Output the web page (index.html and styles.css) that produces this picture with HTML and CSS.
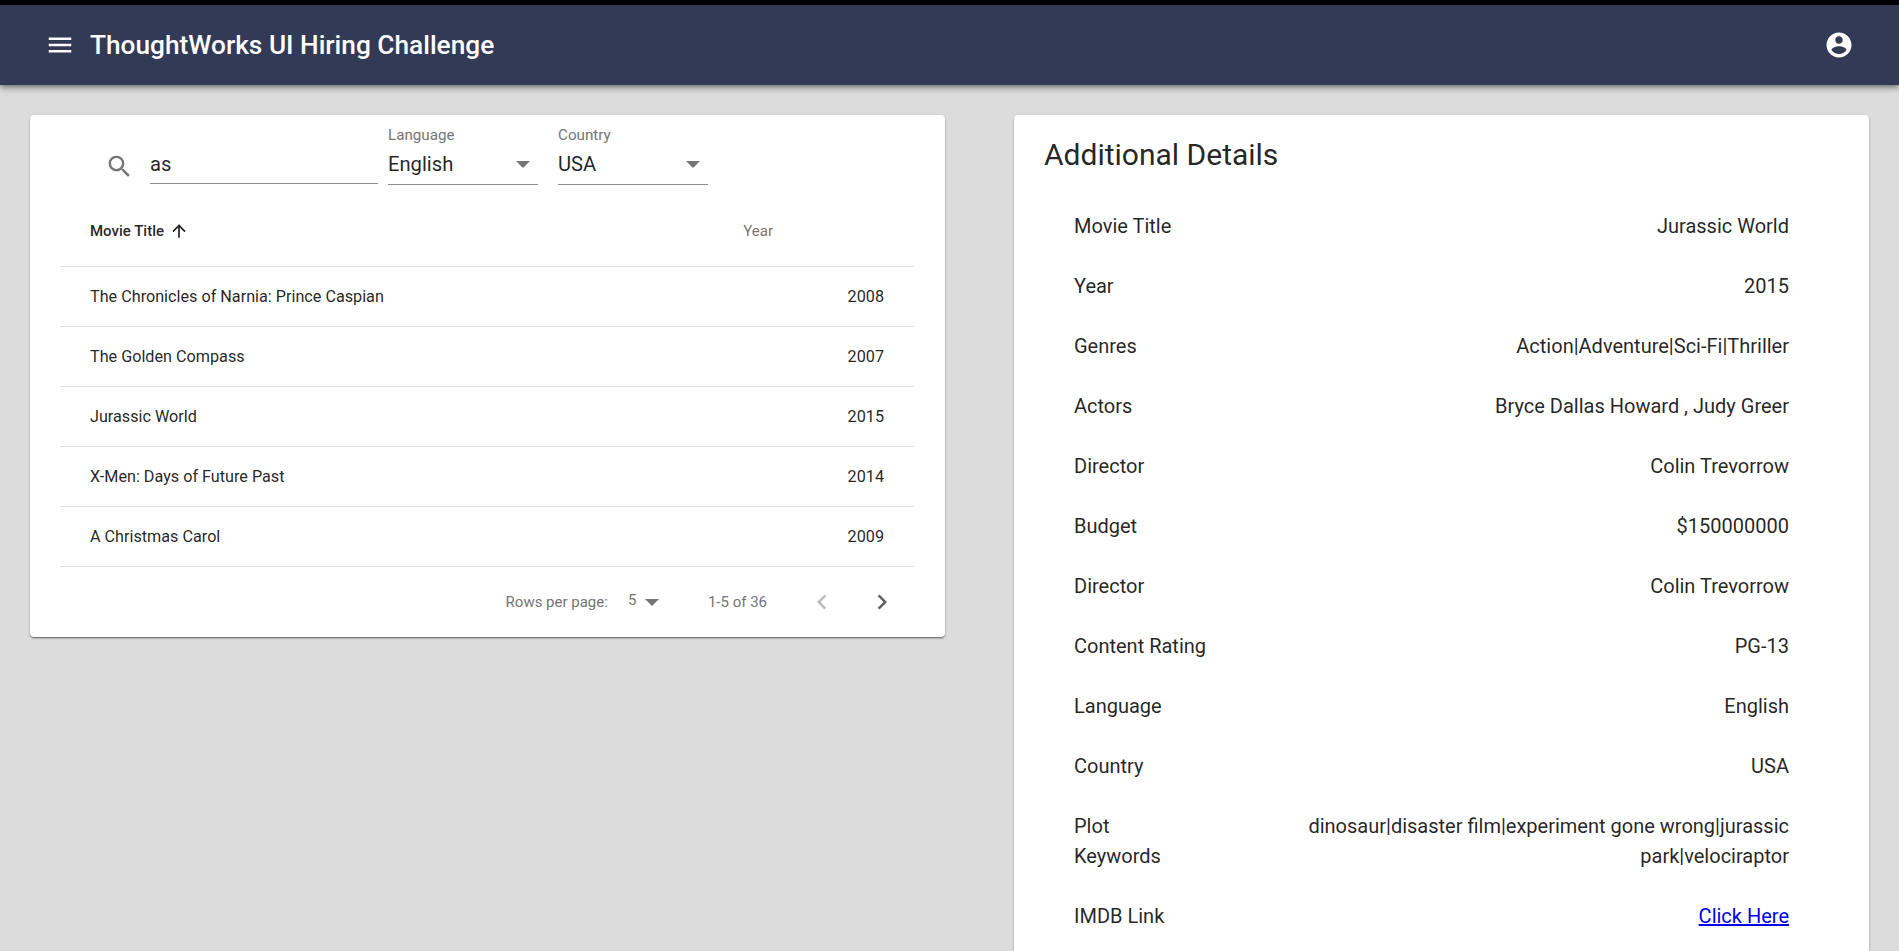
FILE: index.html
```html
<!DOCTYPE html>
<html lang="en">
<head>
<meta charset="utf-8">
<title>ThoughtWorks UI Hiring Challenge</title>
<link rel="stylesheet" href="styles.css">
</head>
<body>
<header class="appbar">
  <svg class="menu-icon" viewBox="0 0 24 24" width="24" height="24"><path d="M3 18h18v-2H3v2zm0-5h18v-2H3v2zm0-7v2h18V6H3z"/></svg>
  <h1 class="app-title">ThoughtWorks UI Hiring Challenge</h1>
  <svg class="account-icon" viewBox="0 0 24 24" width="30" height="30"><path d="M12 2C6.48 2 2 6.48 2 12s4.48 10 10 10 10-4.48 10-10S17.52 2 12 2zm0 3c1.66 0 3 1.34 3 3s-1.34 3-3 3-3-1.34-3-3 1.34-3 3-3zm0 14.2c-2.5 0-4.71-1.28-6-3.22.03-1.99 4-3.08 6-3.08 1.99 0 5.97 1.09 6 3.08-1.29 1.94-3.5 3.22-6 3.22z"/></svg>
</header>
<main class="content">
  <section class="card list-card">
    <div class="filters">
      <svg class="search-icon" viewBox="0 0 24 24" width="29" height="29"><path d="M15.5 14h-.79l-.28-.27C15.41 12.59 16 11.11 16 9.5 16 5.91 13.09 3 9.5 3S3 5.91 3 9.5 5.91 16 9.5 16c1.61 0 3.09-.59 4.23-1.57l.27.28v.79l5 4.99L20.49 19l-4.99-5zm-6 0C7.01 14 5 11.99 5 9.5S7.01 5 9.5 5 14 7.01 14 9.5 11.99 14 9.5 14z"/></svg>
      <div class="field search-field"><span class="field-value">as</span></div>
      <div class="field select-field">
        <span class="field-label">Language</span>
        <div class="select-row"><span class="field-value">English</span><span class="arrow"></span></div>
      </div>
      <div class="field select-field">
        <span class="field-label">Country</span>
        <div class="select-row"><span class="field-value">USA</span><span class="arrow"></span></div>
      </div>
    </div>
    <div class="table">
      <div class="row head-row">
        <span class="head-title">Movie Title
          <svg class="sort-icon" viewBox="0 0 24 24" width="20" height="20"><path d="M4 12l1.41 1.41L11 7.83V20h2V7.83l5.58 5.59L20 12l-8-8-8 8z"/></svg>
        </span>
        <span class="head-year">Year</span>
      </div>
      <div class="row"><span>The Chronicles of Narnia: Prince Caspian</span><span>2008</span></div>
      <div class="row"><span>The Golden Compass</span><span>2007</span></div>
      <div class="row"><span>Jurassic World</span><span>2015</span></div>
      <div class="row"><span>X-Men: Days of Future Past</span><span>2014</span></div>
      <div class="row"><span>A Christmas Carol</span><span>2009</span></div>
    </div>
    <div class="pagination">
      <span class="rows-label">Rows per page:</span>
      <span class="rows-value">5</span>
      <span class="arrow page-arrow"></span>
      <span class="range">1-5 of 36</span>
      <svg class="page-btn disabled" viewBox="0 0 24 24" width="30" height="30"><path d="M15.41 7.41L14 6l-6 6 6 6 1.41-1.41L10.83 12z"/></svg>
      <svg class="page-btn" viewBox="0 0 24 24" width="30" height="30"><path d="M10 6L8.59 7.41 13.17 12l-4.58 4.59L10 18l6-6z"/></svg>
    </div>
  </section>
  <section class="card details-card">
    <h2 class="details-title">Additional Details</h2>
    <dl class="details">
      <div class="detail"><dt>Movie Title</dt><dd>Jurassic World</dd></div>
      <div class="detail"><dt>Year</dt><dd>2015</dd></div>
      <div class="detail"><dt>Genres</dt><dd>Action|Adventure|Sci-Fi|Thriller</dd></div>
      <div class="detail"><dt>Actors</dt><dd>Bryce Dallas Howard , Judy Greer</dd></div>
      <div class="detail"><dt>Director</dt><dd>Colin Trevorrow</dd></div>
      <div class="detail"><dt>Budget</dt><dd>$150000000</dd></div>
      <div class="detail"><dt>Director</dt><dd>Colin Trevorrow</dd></div>
      <div class="detail"><dt>Content Rating</dt><dd>PG-13</dd></div>
      <div class="detail"><dt>Language</dt><dd>English</dd></div>
      <div class="detail"><dt>Country</dt><dd>USA</dd></div>
      <div class="detail"><dt>Plot<br>Keywords</dt><dd>dinosaur|disaster film|experiment gone wrong|jurassic park|velociraptor</dd></div>
      <div class="detail"><dt>IMDB Link</dt><dd><a href="#">Click Here</a></dd></div>
    </dl>
  </section>
</main>
</body>
</html>
```
FILE: styles.css
```css
* { box-sizing: border-box; }
html, body { height: 951px; overflow: hidden; }
body {
  margin: 0;
  background: #dcdcdc;
  border-top: 5px solid #000;
  font-family: Roboto, sans-serif;
  color: rgba(0, 0, 0, 0.87);
}
.appbar {
  display: flex;
  align-items: center;
  height: 80px;
  padding: 0 45px 0 48px;
  background: #333a56;
  color: #fff;
  box-shadow: 0 2px 4px -1px rgba(0,0,0,.3), 0 4px 5px 0 rgba(0,0,0,.2), 0 1px 10px 0 rgba(0,0,0,.12);
  position: relative;
}
.menu-icon { width: 24px; height: 24px; fill: #fff; margin-right: 18px; transform: scale(1.25); }
.app-title { flex: 1; margin: 0; font-size: 26.25px; font-weight: 500; line-height: 1; }
.account-icon { width: 30px; height: 30px; fill: #fff; }
.content {
  display: flex;
  align-items: flex-start;
  justify-content: space-between;
  padding: 30px 30px 0;
}
.card {
  background: #fff;
  border-radius: 4px;
  box-shadow: 0 1px 3px rgba(0,0,0,.2), 0 1px 1px rgba(0,0,0,.2), 0 2px 2px -1px rgba(0,0,0,.3);
}
.list-card { width: 915px; padding: 0 31px 0 30px; }
.filters { display: flex; align-items: flex-end; height: 70px; padding-left: 45px; }
.search-icon { fill: #757575; margin: 0 16px 4px 0; flex: none; }
.field { display: flex; flex-direction: column; border-bottom: 1px solid #8c8c8c; }
.search-field { width: 228px; height: 35px; justify-content: center; margin: 0 10px 1px 0; padding-bottom: 5px; }
.select-field { width: 150px; margin-right: 20px; }
.select-field:last-child { margin-right: 0; }
.field-label { font-size: 15.2px; line-height: 17px; color: #757575; margin-bottom: 4px; }
.field-value { font-size: 20.2px; line-height: 24px; }
.select-row { display: flex; align-items: center; justify-content: space-between; height: 36px; padding: 0 8px 4px 0; }
.arrow { width: 0; height: 0; border-left: 7px solid transparent; border-right: 7px solid transparent; border-top: 7px solid #757575; }
.row {
  display: flex;
  align-items: center;
  justify-content: space-between;
  height: 60px;
  padding: 0 30px;
  font-size: 16.2px;
  border-bottom: 1px solid #e0e0e0;
}
.head-row { height: 82px; font-size: 15px; padding: 10px 141px 0 30px; }
.head-title { display: flex; align-items: center; gap: 5px; font-weight: 500; }
.sort-icon { fill: rgba(0,0,0,.87); }
.head-year { color: #757575; }
.pagination {
  display: flex;
  align-items: center;
  justify-content: flex-end;
  height: 70px;
  font-size: 15px;
  color: #757575;
  padding-right: 17px;
}
.rows-label { margin-right: 20px; }
.rows-value { margin-right: 8.6px; margin-top: -4px; }
.page-arrow { margin-right: 49px; }
.range { margin-right: 40px; }
.page-btn { fill: #616161; margin-left: 30px; }
.range + .page-btn { margin-left: 0; }
.page-btn.disabled { fill: #bdbdbd; }
.details-card { width: 855px; height: 1000px; padding: 22px 30px; }
.details-title { margin: 0 0 23px; font-size: 30px; font-weight: 400; line-height: 36px; }
.details { margin: 0; padding: 0 50px 0 30px; }
.detail {
  display: flex;
  justify-content: space-between;
  align-items: flex-start;
  padding: 15px 0;
  font-size: 20px;
  line-height: 30px;
}
.detail dt { width: 136px; flex: none; }
.detail dd { margin: 0; text-align: right; max-width: 530px; }
.detail a { color: #0000ee; }
```
